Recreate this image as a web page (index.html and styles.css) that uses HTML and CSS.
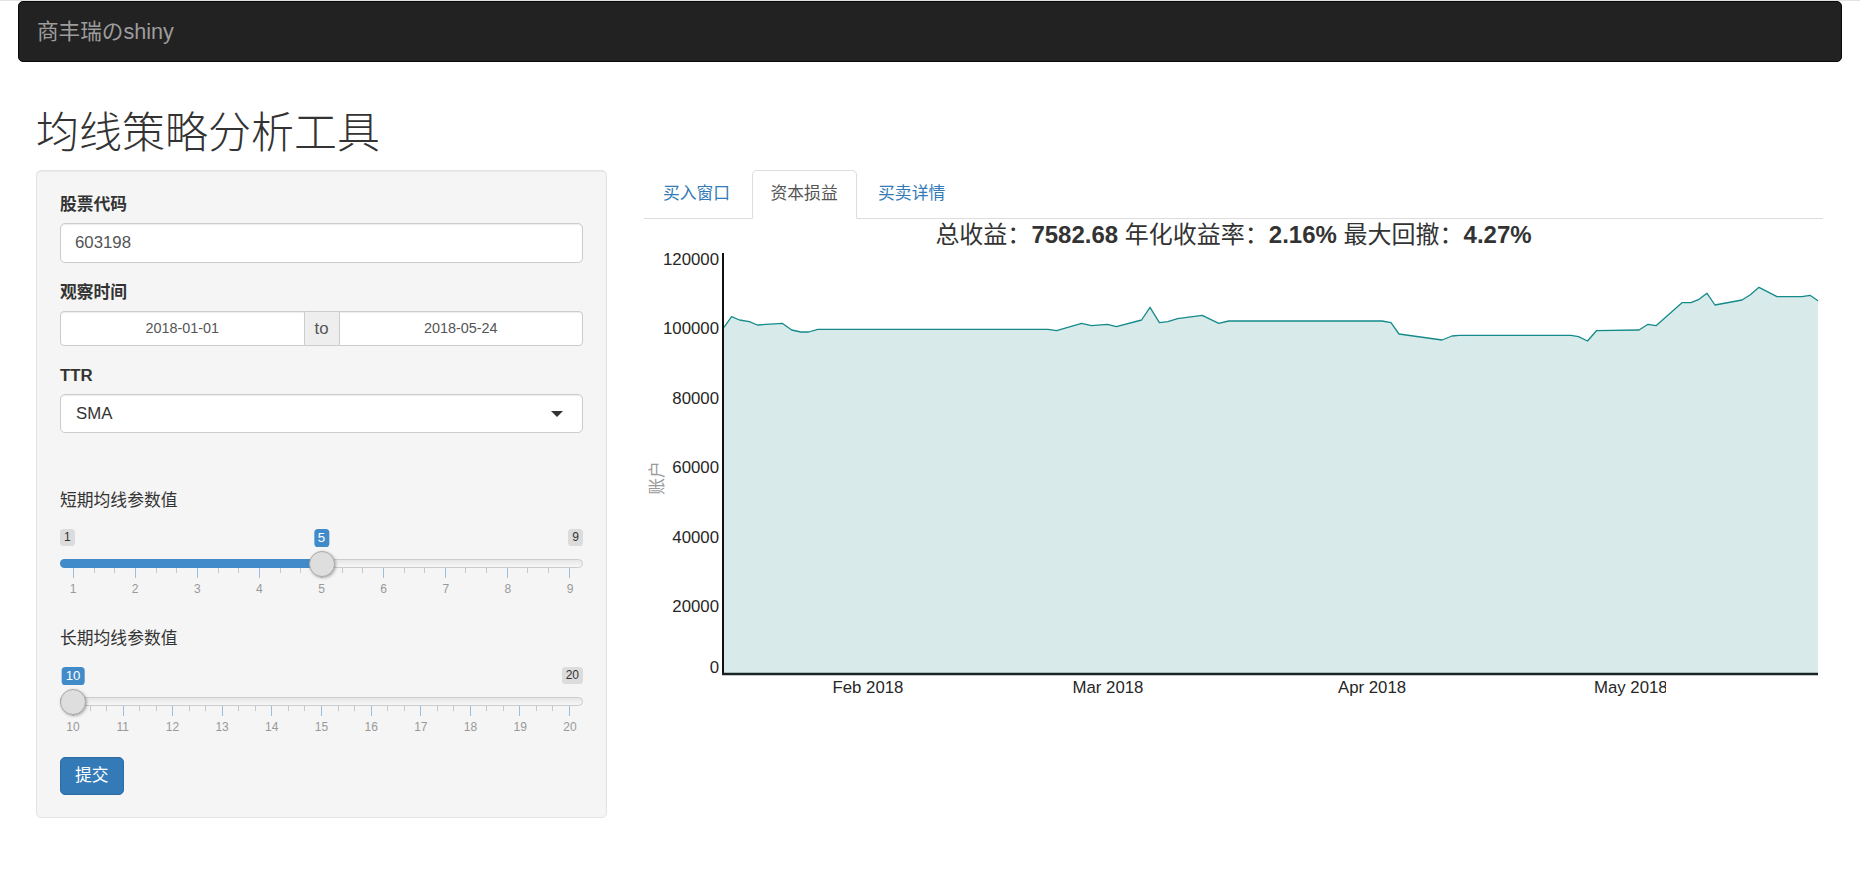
FILE: index.html
```html
<!DOCTYPE html>
<html lang="zh-CN">
<head>
<meta charset="utf-8">
<title>商丰瑞のshiny</title>
<link rel="stylesheet" href="styles.css">
</head>
<body>
<div class="page">
  <nav class="navbar"><span class="brand">商丰瑞のshiny</span></nav>
  <h2 class="title">均线策略分析工具</h2>
  <div class="row">
    <aside class="well">
      <div class="form-group">
        <label class="ctl-label">股票代码</label>
        <div class="input">603198</div>
      </div>
      <div class="form-group">
        <label class="ctl-label">观察时间</label>
        <div class="daterange">
          <div class="date">2018-01-01</div>
          <div class="addon">to</div>
          <div class="date">2018-05-24</div>
        </div>
      </div>
      <div class="form-group spaced">
        <label class="ctl-label">TTR</label>
        <div class="select"><span>SMA</span><span class="caret"></span></div>
      </div>

      <div class="slider" style="--p:0.5">
        <label class="ctl-label light">短期均线参数值</label>
        <div class="irs-labels">
          <span class="irs-min">1</span>
          <span class="irs-max">9</span>
          <span class="irs-single">5</span>
        </div>
        <div class="irs-track"><div class="irs-bar"></div><div class="irs-handle"></div></div>
        <div class="irs-grid">
          <div class="ticks">
            <i class="tick"></i><i class="tick sm"></i><i class="tick sm"></i>
            <i class="tick"></i><i class="tick sm"></i><i class="tick sm"></i>
            <i class="tick"></i><i class="tick sm"></i><i class="tick sm"></i>
            <i class="tick"></i><i class="tick sm"></i><i class="tick sm"></i>
            <i class="tick"></i><i class="tick sm"></i><i class="tick sm"></i>
            <i class="tick"></i><i class="tick sm"></i><i class="tick sm"></i>
            <i class="tick"></i><i class="tick sm"></i><i class="tick sm"></i>
            <i class="tick"></i><i class="tick sm"></i><i class="tick sm"></i>
            <i class="tick"></i>
          </div>
          <div class="nums">
            <span class="num">1</span><span class="num">2</span><span class="num">3</span>
            <span class="num">4</span><span class="num">5</span><span class="num">6</span>
            <span class="num">7</span><span class="num">8</span><span class="num">9</span>
          </div>
        </div>
      </div>

      <div class="slider" style="--p:0">
        <label class="ctl-label light">长期均线参数值</label>
        <div class="irs-labels">
          <span class="irs-max">20</span>
          <span class="irs-single">10</span>
        </div>
        <div class="irs-track"><div class="irs-bar"></div><div class="irs-handle"></div></div>
        <div class="irs-grid">
          <div class="ticks">
            <i class="tick"></i><i class="tick sm"></i><i class="tick sm"></i>
            <i class="tick"></i><i class="tick sm"></i><i class="tick sm"></i>
            <i class="tick"></i><i class="tick sm"></i><i class="tick sm"></i>
            <i class="tick"></i><i class="tick sm"></i><i class="tick sm"></i>
            <i class="tick"></i><i class="tick sm"></i><i class="tick sm"></i>
            <i class="tick"></i><i class="tick sm"></i><i class="tick sm"></i>
            <i class="tick"></i><i class="tick sm"></i><i class="tick sm"></i>
            <i class="tick"></i><i class="tick sm"></i><i class="tick sm"></i>
            <i class="tick"></i><i class="tick sm"></i><i class="tick sm"></i>
            <i class="tick"></i><i class="tick sm"></i><i class="tick sm"></i>
            <i class="tick"></i>
          </div>
          <div class="nums">
            <span class="num">10</span><span class="num">11</span><span class="num">12</span>
            <span class="num">13</span><span class="num">14</span><span class="num">15</span>
            <span class="num">16</span><span class="num">17</span><span class="num">18</span>
            <span class="num">19</span><span class="num">20</span>
          </div>
        </div>
      </div>

      <button class="btn">提交</button>
    </aside>

    <main class="main">
      <ul class="tabs">
        <li><a href="#">买入窗口</a></li>
        <li class="active"><a href="#">资本损益</a></li>
        <li><a href="#">买卖详情</a></li>
      </ul>
      <div class="chart">
        <div class="chart-title">总收益：<b>7582.68</b> 年化收益率：<b>2.16%</b> 最大回撤：<b>4.27%</b></div>
        <svg class="plot" viewBox="644 251 1179 478" width="1179" height="478" xmlns="http://www.w3.org/2000/svg">
          <defs>
            <clipPath id="mayclip"><rect x="1594" y="670" width="72" height="40"/></clipPath>
          </defs>
          <path class="area" d="M724,327.3 L731.6,316.7 L739.5,320 L749.4,321.7 L757.3,325 L782.2,323.3 L791.7,330 L800.8,332 L808.7,332 L817.8,329.3 L1048,329.3 L1056.6,330.7 L1081.6,323.3 L1091.4,325.7 L1107.3,324.3 L1116.4,326.7 L1141.6,320 L1150,307.3 L1159.4,322.7 L1167.8,321.7 L1177.6,318.7 L1202.2,315.3 L1218.8,323.3 L1228.6,321 L1382,321 L1391,322.7 L1399,334 L1442,340 L1452,336 L1459,335.3 L1571,335.3 L1578.6,336.7 L1587.5,341 L1596.4,330.7 L1639,330 L1648,324.3 L1656,325.7 L1682,302.7 L1691,302.7 L1699,299.3 L1707,293.3 L1715,305 L1742,300 L1750,295 L1759,287.3 L1777,296.7 L1802,296.7 L1810,295.3 L1818,300.7 L1818,674 L724,674 Z"/>
          <polyline class="line" points="724,327.3 731.6,316.7 739.5,320 749.4,321.7 757.3,325 782.2,323.3 791.7,330 800.8,332 808.7,332 817.8,329.3 1048,329.3 1056.6,330.7 1081.6,323.3 1091.4,325.7 1107.3,324.3 1116.4,326.7 1141.6,320 1150,307.3 1159.4,322.7 1167.8,321.7 1177.6,318.7 1202.2,315.3 1218.8,323.3 1228.6,321 1382,321 1391,322.7 1399,334 1442,340 1452,336 1459,335.3 1571,335.3 1578.6,336.7 1587.5,341 1596.4,330.7 1639,330 1648,324.3 1656,325.7 1682,302.7 1691,302.7 1699,299.3 1707,293.3 1715,305 1742,300 1750,295 1759,287.3 1777,296.7 1802,296.7 1810,295.3 1818,300.7"/>
          <line class="axis-y" x1="723" y1="253" x2="723" y2="675"/>
          <line class="axis-x" x1="722" y1="674" x2="1818" y2="674"/>
          <g class="ylab">
            <text x="719" y="264.5">120000</text>
            <text x="719" y="334">100000</text>
            <text x="719" y="403.5">80000</text>
            <text x="719" y="473">60000</text>
            <text x="719" y="542.5">40000</text>
            <text x="719" y="612">20000</text>
            <text x="719" y="673">0</text>
          </g>
          <g class="xlab">
            <text x="868" y="693">Feb 2018</text>
            <text x="1108" y="693">Mar 2018</text>
            <text x="1372" y="693">Apr 2018</text>
          </g>
          <text class="xlab-start" x="1594" y="693" clip-path="url(#mayclip)">May 2018</text>
          <text class="ytitle" transform="translate(657 478) rotate(-90)">账户</text>
        </svg>
      </div>
    </main>
  </div>
</div>
</body>
</html>
```

FILE: styles.css
```css
* { box-sizing: border-box; }

html, body { margin: 0; }

body {
  background: #fff;
  border-top: 1px solid #e3e3e3;
  font-family: "Liberation Sans", "Noto Sans CJK SC", sans-serif;
  font-size: 16.8px;
  line-height: 24px;
  color: #333;
}

.page { padding: 0 18px; }

/* navbar */
.navbar {
  height: 61px;
  background: #222;
  border: 1px solid #080808;
  border-radius: 5px;
  padding: 0 18px;
  display: flex;
  align-items: flex-start;
}
.brand {
  padding-top: 18px;
  font-size: 21.6px;
  line-height: 24px;
  color: #9d9d9d;
}

.title {
  margin: 48px 0 13px;
  padding-left: 18px;
  font-size: 43px;
  line-height: 47px;
  font-weight: 300;
  color: #333;
}

.row {
  display: flex;
  align-items: flex-start;
  gap: 37px;
  padding: 0 19px 0 18px;
}

/* sidebar */
.well {
  width: 571px;
  flex: none;
  background: #f5f5f5;
  border: 1px solid #e3e3e3;
  border-radius: 5px;
  padding: 22px 23px 22px;
  box-shadow: inset 0 1px 1px rgba(0,0,0,.05);
}

.form-group { margin-bottom: 18px; }
.form-group.spaced { margin-bottom: 56px; }

.ctl-label {
  display: block;
  font-weight: bold;
  margin-bottom: 6px;
}
.ctl-label.light {
  font-weight: normal;
  margin-bottom: 0;
}

.input {
  height: 40px;
  border: 1px solid #ccc;
  border-radius: 5px;
  background: #fff;
  padding: 0 14px;
  line-height: 38px;
  color: #555;
  box-shadow: inset 0 1px 1px rgba(0,0,0,.075);
}

.daterange { display: flex; height: 35px; }
.date {
  flex: 1;
  border: 1px solid #ccc;
  background: #fff;
  text-align: center;
  font-size: 14.4px;
  line-height: 33px;
  color: #555;
  box-shadow: inset 0 1px 1px rgba(0,0,0,.075);
}
.date:first-child { border-radius: 4px 0 0 4px; }
.date:last-child { border-radius: 0 4px 4px 0; }
.addon {
  width: 34px;
  flex: none;
  background: #eee;
  border-top: 1px solid #ccc;
  border-bottom: 1px solid #ccc;
  text-align: center;
  line-height: 33px;
  color: #555;
}

.select {
  height: 39px;
  border: 1px solid #ccc;
  border-radius: 5px;
  background: #fff;
  display: flex;
  align-items: center;
  justify-content: space-between;
  padding: 0 19px 0 15px;
  color: #333;
  box-shadow: inset 0 1px 1px rgba(0,0,0,.075);
}
.caret {
  width: 0;
  height: 0;
  border-left: 6px solid transparent;
  border-right: 6px solid transparent;
  border-top: 6px solid #333;
}

/* sliders */
.slider + .slider { margin-top: 30px; }

.irs-labels { position: relative; height: 46px; }
.irs-min, .irs-max {
  position: absolute;
  top: 16px;
  font-size: 12px;
  line-height: 15px;
  padding: 1px 4px;
  background: rgba(0,0,0,.1);
  border-radius: 3.6px;
  color: #333;
}
.irs-min { left: 0; }
.irs-max { right: 0; }
.irs-single {
  position: absolute;
  top: 16px;
  left: calc(13px + var(--p) * (100% - 26px));
  transform: translateX(-50%);
  font-size: 13.2px;
  line-height: 16px;
  padding: 1px 4px;
  background: #428bca;
  color: #fff;
  border-radius: 3.6px;
}

.irs-track {
  position: relative;
  height: 9px;
  border: 1px solid #ccc;
  border-radius: 8px;
  background: linear-gradient(to bottom, #dedede -50%, #fff 150%);
}
.irs-bar {
  position: absolute;
  left: -1px;
  top: -1px;
  bottom: -1px;
  width: calc(13px + var(--p) * (100% - 24px));
  background: #428bca;
  border-radius: 8px 0 0 8px;
}
.irs-handle {
  position: absolute;
  top: 50%;
  left: calc(12px + var(--p) * (100% - 24px));
  width: 26px;
  height: 26px;
  transform: translate(-50%, -50%);
  border-radius: 50%;
  background: #dedede;
  border: 1px solid #ababab;
  box-shadow: 1px 1px 3px rgba(0,0,0,.3);
}

.irs-grid { padding: 0 13px; }
.ticks {
  display: flex;
  justify-content: space-between;
  align-items: flex-start;
  height: 10px;
}
.tick {
  display: block;
  width: 1px;
  height: 10px;
  background: rgba(66,139,202,.5);
}
.tick.sm {
  height: 5px;
  background: rgba(153,153,153,.5);
}
.nums {
  display: flex;
  justify-content: space-between;
  margin-top: 3px;
}
.num {
  width: 0;
  display: flex;
  justify-content: center;
  white-space: nowrap;
  font-size: 12px;
  line-height: 16px;
  color: #999;
}

.btn {
  display: block;
  margin-top: 22px;
  height: 38px;
  padding: 0 14px;
  border: 1px solid #2e6da4;
  border-radius: 5px;
  background: #337ab7;
  color: #fff;
  font: inherit;
  line-height: 36px;
}

/* main panel */
.main { flex: 1; min-width: 0; }

.tabs {
  display: flex;
  list-style: none;
  margin: 0;
  padding: 0;
  border-bottom: 1px solid #ddd;
}
.tabs li { margin: 0 2.4px -1px 0; }
.tabs a {
  display: block;
  padding: 11px 18px 12px;
  line-height: 24px;
  border: 1px solid transparent;
  border-radius: 5px 5px 0 0;
  color: #337ab7;
  text-decoration: none;
}
.tabs li.active a {
  color: #555;
  background: #fff;
  border-color: #ddd #ddd transparent;
}

.chart-title {
  text-align: center;
  font-size: 24px;
  line-height: 32px;
  color: #333;
}
.chart-title b { font-weight: bold; }

.plot { display: block; width: 100%; height: 478px; }
.plot .area { fill: #d8ebea; }
.plot .line { fill: none; stroke: #158a8a; stroke-width: 1.3; stroke-linejoin: round; }
.plot .axis-y { stroke: #111; stroke-width: 2; }
.plot .axis-x { stroke: #182424; stroke-width: 2.5; }
.plot text {
  font-family: "Liberation Sans", "Noto Sans CJK SC", sans-serif;
  font-size: 16.8px;
  fill: #262626;
}
.plot .ylab text { text-anchor: end; }
.plot .xlab text { text-anchor: middle; }
.plot .ytitle { text-anchor: middle; dominant-baseline: central; fill: #9a9a9a; }
```
